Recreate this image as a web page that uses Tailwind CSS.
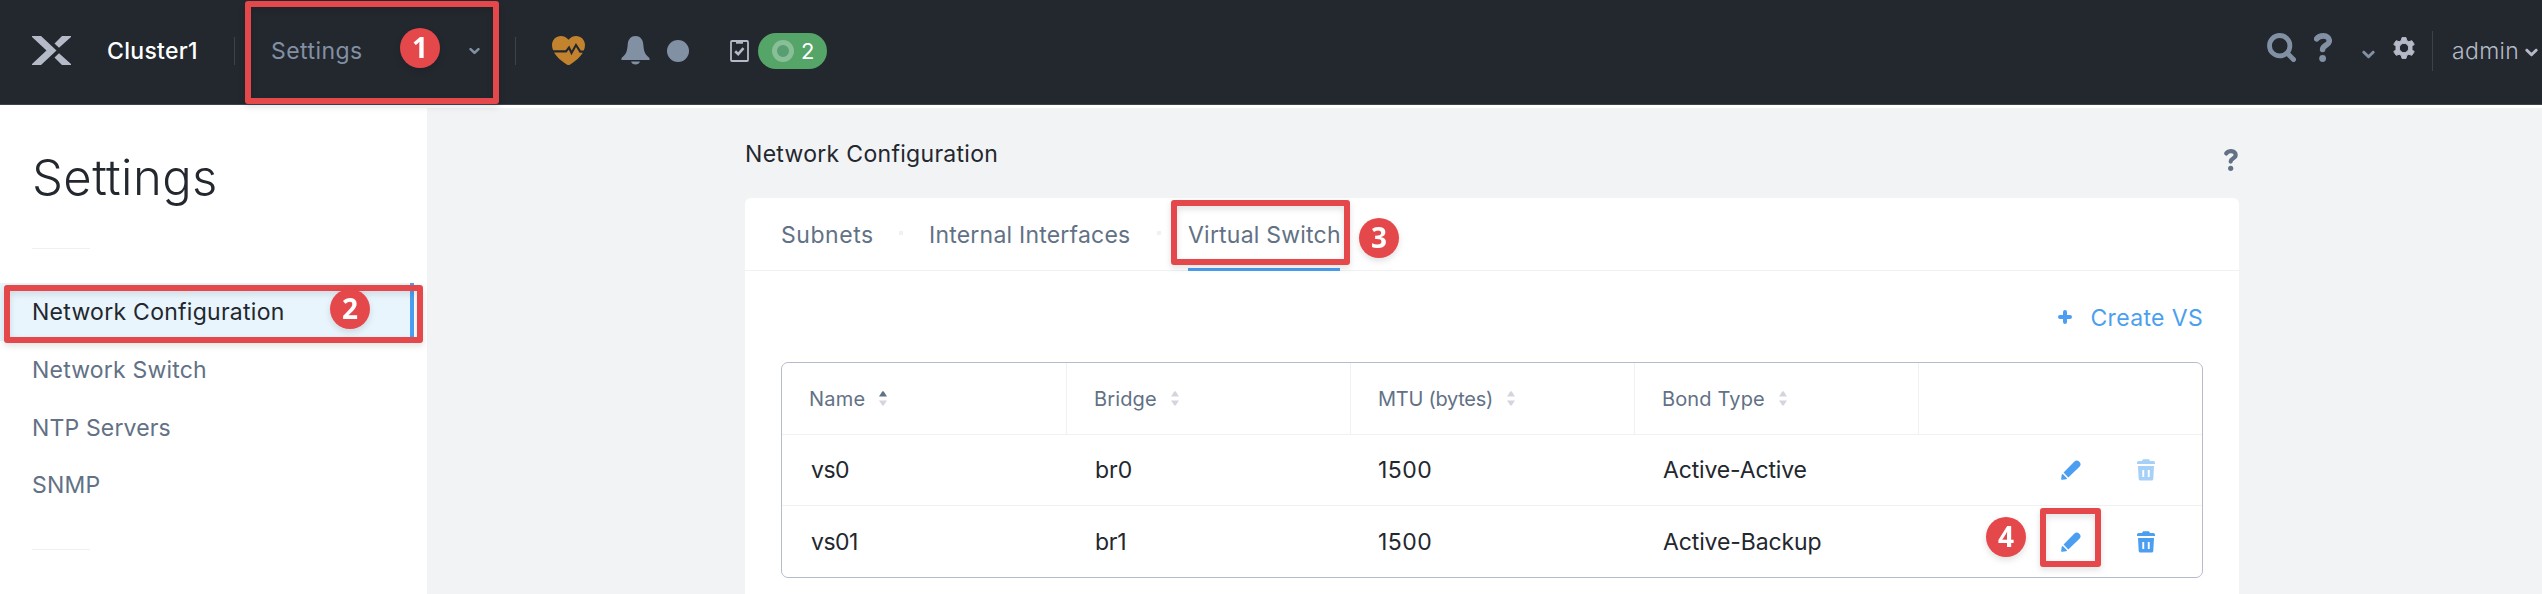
<!DOCTYPE html>
<html lang="en">
<head>
<meta charset="utf-8">
<title>Settings - Network Configuration</title>
<script src="https://cdn.jsdelivr.net/npm/@tailwindcss/browser@4"></script>
</head>
<body class="relative h-[594px] w-[2542px] overflow-hidden bg-white font-['Inter',sans-serif] text-[23px] leading-8 whitespace-nowrap text-[#23272e]">

<svg class="hidden">
  <symbol id="pencil" viewBox="0 0 20 20"><path d="M7.300 17.400 2.600 12.600 13.700 1.300C16.600-1.400 21.700 3.500 18.700 6.400Z M1.500 13.800 6.200 18.500 5.200 19.200 1.200 19.800C.4 19.900.1 19.600.2 18.900L.6 15.200Z"/></symbol>
  <symbol id="trash" viewBox="0 0 18 22"><path fill-rule="evenodd" d="M0 5V3.700Q0 2.100 1.600 2.100H5L6 .2H12L13 2.100H16.400Q18 2.100 18 3.700V5Z M1 7H17L16.300 20Q16.200 21.600 14.700 21.600H3.300Q1.800 21.600 1.700 20Z M5.300 11V18H7.200V11Z M10.800 11V18H12.700V11Z"/></symbol>
  <symbol id="chevron" viewBox="0 0 14 9"><path d="M2 2 7 7 12 2" fill="none" stroke="currentColor" stroke-width="3.200" stroke-linecap="round" stroke-linejoin="round"/></symbol>
  <symbol id="help" viewBox="0 0 18 29"><path d="M2.700 5.800Q5 2.900 9.300 2.900C13 2.900 15.300 4.900 15.300 8C15.300 12.300 8.800 12 8.600 16.500" fill="none" stroke="currentColor" stroke-width="5.600" stroke-linecap="round"/><circle cx="8.600" cy="25.500" r="3.400"/></symbol>
  <symbol id="sort" viewBox="0 0 8 15"><path d="M0 5.500 3.200.6Q4 0 4.800.6L8 5.500Z" class="fill-(--up)"/><path d="M0 9.500H8L4.800 14.300Q4 15 3.200 14.300Z" fill="#d3d6de"/></symbol>
</svg>

<header class="flex h-[105px] items-center border-b border-[#3b4354] bg-[#23272e] pb-[3px]">
  <svg class="ml-8 h-[29px] w-[39px] fill-[#b4bac7]" viewBox="0 0 39 29"><path d="M0 0H9L24.500 14.500 9 29H0V28L14.500 14.500 0 1Z M30 0H39V1L27 11.800 22.500 7.500Z M22.500 21.500 27 17.200 39 28V29H30Z"/></svg>
  <span class="ml-[36px] w-[127px] font-medium tracking-[0.3px] text-white">Cluster1</span>
  <span class="h-7 w-px bg-[#3d434d]"></span>
  <span class="ml-[36px] w-[198px] tracking-[0.44px] text-[#8290a4]">Settings</span>
  <svg class="h-[8px] w-[11px] text-[#8290a4]" viewBox="0 0 14 9"><use href="#chevron"/></svg>
  <span class="ml-[35px] h-7 w-px bg-[#3d434d]"></span>
  <svg class="ml-[36px] h-[29px] w-[33px]" viewBox="0 0 33 29"><path fill="#c3832e" d="M16.500 3.800C19 .9 21.500 0 24 0C29 0 33 3.900 33 9C33 17 25 24.500 18.200 28.400Q16.500 29.400 14.800 28.400C8 24.500 0 17 0 9C0 3.900 4 0 9 0C11.500 0 14 .9 16.500 3.800Z"/><path d="M0 15.400H14L17 11.500 19.500 17 24 9 28.200 15.600H33" fill="none" stroke="#23272e" stroke-width="2.100"/></svg>
  <svg class="ml-[36px] h-[29px] w-[29px] fill-[#8290a4]" viewBox="0 0 29 29"><path d="M14.500 0C19 0 21.800 3 22.300 8.500C22.800 15 23.800 18.500 28 21.500Q29 22.500 28.500 24H.5Q0 22.500 1 21.500C5.200 18.500 6.200 15 6.700 8.500C7.200 3 10 0 14.500 0Z M10 25.500H19Q18 28.500 14.500 28.500T10 25.500Z"/></svg>
  <span class="ml-[17px] size-[22px] rounded-full bg-[#8290a4]"></span>
  <svg class="ml-[41px] h-[22px] w-[19px]" viewBox="0 0 19 22" fill="none" stroke="#b4bac7"><rect x="1" y="1" width="17" height="20" rx="1" stroke-width="1.800"/><path d="M6 2.700H13" stroke-width="2"/><path d="M5.200 11.300 8.200 14.200 13.500 8.200" stroke-width="2.600"/></svg>
  <span class="ml-[9px] flex h-9 w-[69px] items-center rounded-full bg-[#55a468] pl-[14px] text-white"><span class="size-[22px] rounded-full border-[5.500px] border-[#89bf96] bg-[#589e73]"></span><span class="ml-[7px] text-[22px]">2</span></span>
  <span class="mt-[-7px] ml-auto flex"><svg class="h-[29px] w-[29px] text-[#8290a4]" viewBox="0 0 29 29" fill="none" stroke="currentColor"><circle cx="12.700" cy="12.700" r="10.200" stroke-width="4.800"/><path d="M20.500 20.500 26.500 26.500" stroke-width="5" stroke-linecap="round"/></svg>
  <svg class="ml-[18px] h-[29px] w-[18px] fill-[#8290a4] text-[#8290a4]" viewBox="0 0 18 29"><use href="#help"/></svg></span>
  <svg class="mt-[8px] ml-[30px] h-[9px] w-[13px] text-[#8290a4]" viewBox="0 0 14 9"><use href="#chevron"/></svg>
  <svg class="mt-[-6px] ml-[18px] size-[22px]" viewBox="0 0 22 22"><path fill="#b4bac7" stroke="#b4bac7" stroke-width="1" stroke-linejoin="round" fill-rule="evenodd" d="M9 .6H13L13.700 3.500 15.800 4.700 18.800 3.700 21.200 7.200 19 9.600V12.400L21.200 14.800 18.800 18.300 15.800 17.300 13.700 18.500 13 21.400H9L8.300 18.500 6.200 17.300 3.200 18.300.8 14.800 3 12.400V9.600L.8 7.200 3.200 3.700 6.200 4.700 8.300 3.500Z M11 6.300A4.700 4.700 0 1 0 11 15.700 4.700 4.700 0 1 0 11 6.300Z"/></svg>
  <span class="ml-[17px] h-10 w-px bg-[#3b424e]"></span>
  <span class="ml-[19px] w-[73px] font-light tracking-[0.35px] text-[#b4bac7]">admin</span>
  <svg class="mt-[4px] mr-[4px] h-[9px] w-[13px] text-[#b4bac7]" viewBox="0 0 14 9"><use href="#chevron"/></svg>
</header>

<div class="flex h-[489px]">
  <aside class="flex w-[427px] flex-col pt-[40px]">
    <h1 class="ml-[32px] h-[63px] text-[49px] leading-[66px] font-light tracking-[0.4px]">Settings</h1>
    <span class="mt-10 ml-8 h-px w-[58px] bg-[#eff0f2]"></span>
    <nav class="mt-[34px] flex flex-col tracking-[0.25px] text-[#627185]">
      <a class="mr-[13px] flex h-[58px] items-center border-r-4 border-[#4c9ff0] bg-[#e9f5fd] pl-[32px] tracking-[0.27px] text-[#23272e]">Network Configuration</a>
      <a class="flex h-[58px] items-center pl-[32px] tracking-[0.2px]">Network Switch</a>
      <a class="flex h-[57px] items-center pl-[32px] tracking-[0.15px]">NTP Servers</a>
      <a class="flex h-[58px] items-center pl-[32px]">SNMP</a>
    </nav>
    <span class="mt-[35px] ml-8 h-px w-[58px] bg-[#eff0f2]"></span>
  </aside>

  <main class="mt-[3px] flex-1 bg-[#f2f3f5] pl-[318px]">
    <div class="flex h-[90px] w-[1494px] items-start justify-between pt-[30px]">
      <h2 class="tracking-[0.3px]">Network Configuration</h2>
      <svg class="mt-[11px] mr-px h-[22px] w-[14px] fill-[#627185] text-[#627185]" viewBox="0 0 18 29"><use href="#help"/></svg>
    </div>
    <section class="h-[420px] w-[1494px] rounded-t-[6px] bg-white">
      <div class="flex h-[73px] items-center border-b border-[#f0f1f3] pl-[36px] text-[#627185]">
        <span class="w-[118px] pt-px tracking-[0.55px]">Subnets</span>
        <i class="mt-[-2px] size-[4px] bg-[#f0f1f3]"></i>
        <span class="ml-[26px] w-[228px] pt-px tracking-[0.22px]">Internal Interfaces</span>
        <i class="mt-[-2px] size-[4px] bg-[#f0f1f3]"></i>
        <span class="-mb-px ml-[27px] flex h-[73px] w-[152px] items-center border-b-3 border-[#4c9ff0] pt-[3px] tracking-[0.22px]">Virtual Switch</span>
      </div>
      <div class="flex h-[91px] items-center justify-end pt-[2px] pr-[36px] text-[#4c9ff0]">
        <svg class="mt-[-1px] mr-[18px] size-[14px]" viewBox="0 0 14 14"><path d="M7 2V12M2 7H12" stroke="currentColor" stroke-width="4" stroke-linecap="round"/></svg>
        <span class="tracking-[0.35px]">Create VS</span>
      </div>
      <div class="mx-9 h-[216px] w-[1422px] rounded-[7px] border border-[#b6bdca]">
        <div class="grid h-[72px] grid-cols-[285px_284px_284px_284px_1fr] border-b border-[#f0f1f3] text-[20px] text-[#627185] [--up:#d3d6de]">
          <span class="flex items-center border-r border-[#f0f1f3] pl-[27px] tracking-[0.23px] [--up:#627185]">Name<svg class="ml-[14px] h-[15px] w-[8px]"><use href="#sort"/></svg></span>
          <span class="flex items-center border-r border-[#f0f1f3] pl-[27px] tracking-[0.14px]">Bridge<svg class="ml-[14px] h-[15px] w-[8px]"><use href="#sort"/></svg></span>
          <span class="flex items-center border-r border-[#f0f1f3] pl-[27px] tracking-[-0.27px]">MTU (bytes)<svg class="ml-[14px] h-[15px] w-[8px]"><use href="#sort"/></svg></span>
          <span class="flex items-center border-r border-[#f0f1f3] pl-[27px] tracking-[0.14px]">Bond Type<svg class="ml-[14px] h-[15px] w-[8px]"><use href="#sort"/></svg></span>
          <span></span>
        </div>
        <div class="grid h-[71px] grid-cols-[285px_284px_284px_284px_1fr] items-center border-b border-[#f0f1f3]">
          <span class="pl-[29px] tracking-[-0.5px]">vs0</span>
          <span class="pl-[28px]">br0</span>
          <span class="pl-[27px] tracking-[0.45px]">1500</span>
          <span class="pl-[28px] tracking-[-0.15px]">Active-Active</span>
          <span class="flex items-center pl-[142px]"><svg class="size-5 fill-[#4c9ff0]"><use href="#pencil"/></svg><svg class="ml-[56px] h-[22px] w-[18px] fill-[#a6d0f8]"><use href="#trash"/></svg></span>
        </div>
        <div class="grid h-[71px] grid-cols-[285px_284px_284px_284px_1fr] items-center">
          <span class="pl-[29px] tracking-[-0.5px]">vs01</span>
          <span class="pl-[28px] tracking-[-0.3px]">br1</span>
          <span class="pl-[27px] tracking-[0.45px]">1500</span>
          <span class="pl-[28px] tracking-[-0.12px]">Active-Backup</span>
          <span class="flex items-center pl-[142px]"><svg class="size-5 fill-[#4c9ff0]"><use href="#pencil"/></svg><svg class="ml-[56px] h-[22px] w-[18px] fill-[#4c9ff0]"><use href="#trash"/></svg></span>
        </div>
      </div>
    </section>
  </main>
</div>

<!-- Step annotations laid over the page -->
<div class="absolute top-[1px] left-[245px] h-[103px] w-[254px] rounded-[3px] border-6 border-[#e4484b] drop-shadow-md"></div>
<div class="absolute top-[285px] left-[4px] h-[58px] w-[419px] rounded-[3px] border-6 border-[#e4484b] drop-shadow-md"></div>
<div class="absolute top-[200px] left-[1171px] h-[65px] w-[179px] rounded-[3px] border-6 border-[#e4484b] drop-shadow-md"></div>
<div class="absolute top-[508px] left-[2040px] h-[59px] w-[61px] rounded-[3px] border-6 border-[#e4484b] drop-shadow-md"></div>
<div class="absolute top-[28px] left-[400px] flex size-10 items-center justify-center rounded-full bg-[#e4484b] pb-[2px] font-['Noto_Sans',sans-serif] text-[28px] font-bold text-white drop-shadow-md">1</div>
<div class="absolute top-[289px] left-[330px] flex size-10 items-center justify-center rounded-full bg-[#e4484b] pb-[2px] font-['Noto_Sans',sans-serif] text-[28px] font-bold text-white drop-shadow-md">2</div>
<div class="absolute top-[218px] left-[1359px] flex size-10 items-center justify-center rounded-full bg-[#e4484b] pb-[2px] font-['Noto_Sans',sans-serif] text-[28px] font-bold text-white drop-shadow-md">3</div>
<div class="absolute top-[517px] left-[1986px] flex size-10 items-center justify-center rounded-full bg-[#e4484b] pb-[2px] font-['Noto_Sans',sans-serif] text-[28px] font-bold text-white drop-shadow-md">4</div>
</body>
</html>
